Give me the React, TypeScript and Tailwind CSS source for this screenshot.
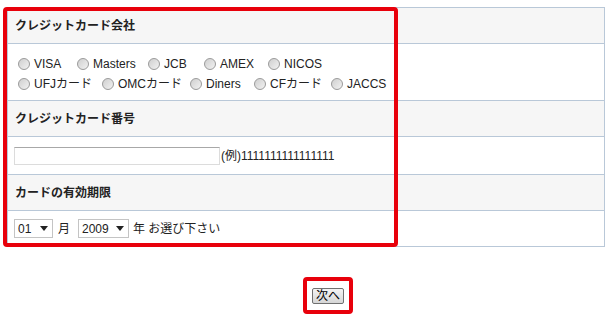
import React from 'react'

const font = { fontFamily: '"Liberation Sans", "Noto Sans CJK JP", sans-serif' }

function Radio({ label }: { label: string }) {
  return (
    <label className="flex items-center h-[14px] leading-[14px]">
      <span className="w-[12px] h-[12px] rounded-full border border-[#9a9a9a] bg-linear-to-br from-[#cfcfcf] to-[#f2f2f2]" />
      <span className="ml-[4px]">{label}</span>
    </label>
  )
}

function Select({ value, width }: { value: string; width: string }) {
  return (
    <div className={`flex items-center justify-between h-[19px] border border-[#c4c4c4] bg-white pl-[3px] pr-[4px] ${width}`}>
      <span>{value}</span>
      <svg width="8" height="5" viewBox="0 0 8 5">
        <path d="M0 0h8L4 5z" fill="#222" />
      </svg>
    </div>
  )
}

export default function App() {
  return (
    <div className="relative w-[611px] h-[330px] bg-white text-[12px] text-[#222]" style={font}>
      {/* Form table */}
      <div className="absolute left-[7px] top-[7px] w-[598px] border border-[#b9c8d8]">
        <div className="h-[36px] border-b border-[#b9c8d8] bg-[#f6f6f6] flex items-center pl-[7px] font-bold">
          クレジットカード会社
        </div>
        <div className="h-[57px] border-b border-[#b9c8d8] flex flex-col gap-[6px] pt-[13px] pl-[10px]">
          <div className="flex">
            <div className="w-[59px]"><Radio label="VISA" /></div>
            <div className="w-[71px]"><Radio label="Masters" /></div>
            <div className="w-[56px]"><Radio label="JCB" /></div>
            <div className="w-[64px]"><Radio label="AMEX" /></div>
            <Radio label="NICOS" />
          </div>
          <div className="flex">
            <div className="w-[84px]"><Radio label="UFJカード" /></div>
            <div className="w-[88px]"><Radio label="OMCカード" /></div>
            <div className="w-[64px]"><Radio label="Diners" /></div>
            <div className="w-[77px]"><Radio label="CFカード" /></div>
            <Radio label="JACCS" />
          </div>
        </div>
        <div className="h-[36px] border-b border-[#b9c8d8] bg-[#f6f6f6] flex items-center pl-[7px] font-bold">
          クレジットカード番号
        </div>
        <div className="h-[38px] border-b border-[#b9c8d8] flex items-center pl-[6px]">
          <div className="w-[206px] h-[18px] border border-[#dcdcdc] border-t-[#a8a8a8] bg-white" />
          <span className="ml-[1px]">(例)1111111111111111</span>
        </div>
        <div className="h-[36px] border-b border-[#b9c8d8] bg-[#f6f6f6] flex items-center pl-[7px] font-bold">
          カードの有効期限
        </div>
        <div className="h-[35px] flex items-center pl-[6px]">
          <Select value="01" width="w-[39px]" />
          <span className="ml-[5px]">月</span>
          <div className="ml-[8px]"><Select value="2009" width="w-[51px]" /></div>
          <span className="ml-[4px]">年 お選び下さい</span>
        </div>
      </div>

      {/* Red annotation around the form */}
      <div className="absolute left-[3px] top-[7px] w-[395px] h-[240px] border-4 border-[#e8000b] rounded-[4px]" />

      {/* Next button */}
      <div className="absolute left-[303px] top-[277px] w-[50px] h-[37px] border-4 border-[#e8000b] rounded-[4px] flex items-center justify-center">
        <button className="w-[32px] h-[16px] border border-[#707070] rounded-[2px] bg-linear-to-b from-[#f4f4f4] to-[#d6d6d6] text-[12px] leading-none text-black flex items-center justify-center" style={font}>
          次へ
        </button>
      </div>
    </div>
  )
}
